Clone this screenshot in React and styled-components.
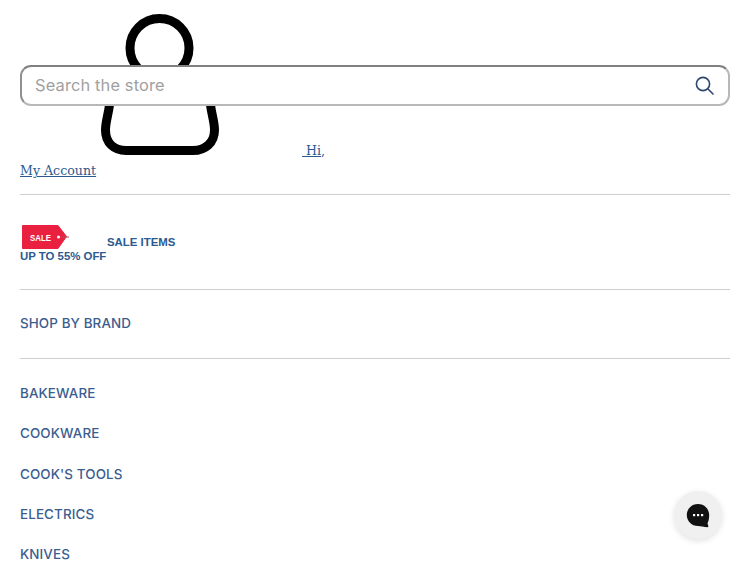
import React from "react";
import styled, { createGlobalStyle } from "styled-components";

const Global = createGlobalStyle`
  html, body { margin: 0; padding: 0; background: #fff; overflow: hidden; height: 100%; }
  #root { height: 100%; }
`;

const Page = styled.div`
  position: relative;
  height: 563px;
  overflow: hidden;
  padding: 0 20px;
  box-sizing: border-box;
  font-family: "Inter", "Liberation Sans", sans-serif;
`;

const SearchBar = styled.form`
  position: absolute;
  top: 65px;
  left: 20px;
  right: 20px;
  height: 41px;
  margin: 0;
  z-index: 2;
`;

const SearchInput = styled.input`
  width: 100%;
  height: 100%;
  box-sizing: border-box;
  border-width: 2px;
  border-style: solid;
  border-color: #808080 #b8b8b8 #b8b8b8 #909090;
  border-radius: 11px;
  background: #fff;
  padding: 0 50px 2px 13px;
  font-family: "Inter", "Liberation Sans", sans-serif;
  font-size: 16.4px;
  letter-spacing: 0.15px;
  color: #333;
  outline: none;
  &::placeholder { color: #a0a0a0; opacity: 1; }
`;

const SearchButton = styled.button`
  position: absolute;
  top: 9px;
  right: 16px;
  width: 20px;
  height: 22px;
  padding: 0;
  border: 0;
  background: none;
  color: #2f4673;
  display: flex;
  align-items: center;
  justify-content: center;
`;

const Account = styled.div`
  height: 194px;
  padding-top: 14px;
  box-sizing: border-box;
  font-family: "DejaVu Serif", "Liberation Serif", serif;
  font-size: 12.6px;
  line-height: 20px;
  color: #34578a;
`;

const AccountLink = styled.a`
  color: #2c5a8f;
  text-decoration: underline;
`;

const AccountIcon = styled.svg`
  width: 282px;
  height: 142px;
  vertical-align: baseline;
  margin-bottom: -1px;
`;

const Rule = styled.hr`
  margin: 0;
  border: 0;
  border-top: 1px solid #cfcfcf;
`;

const SaleRow = styled.div`
  height: 94px;
  padding-top: 30px;
  box-sizing: border-box;
  font-family: "Liberation Sans", Arial, sans-serif;
  font-size: 11.4px;
  font-weight: 700;
  line-height: 14px;
  color: #2c5a8f;
`;

const SaleTop = styled.div`
  display: flex;
  align-items: flex-end;
  margin-bottom: -1px;
`;

const SaleTag = styled.svg`
  width: 87px;
  height: 25px;
  display: block;
  flex: none;
`;

const SaleTitle = styled.span`
  line-height: 14px;
  margin-bottom: 1px;
`;

const NavBlock = styled.nav`
  display: flex;
  flex-direction: column;
  padding: ${(p) => p.$pad || "0"};
`;

const NavLink = styled.a`
  display: block;
  height: 40.25px;
  line-height: 40px;
  font-size: 13.4px;
  font-weight: 500;
  letter-spacing: 0.12px;
  color: #3a5d8f;
  text-decoration: none;
`;

const ChatBubble = styled.button`
  position: fixed;
  left: 674px;
  top: 491px;
  width: 48px;
  height: 48px;
  padding: 0;
  border: 0;
  border-radius: 50%;
  background: #f0f0f0;
  box-shadow: 0 2px 6px rgba(0, 0, 0, 0.12);
  display: flex;
  align-items: center;
  justify-content: center;
`;

const items = ["BAKEWARE", "COOKWARE", "COOK'S TOOLS", "ELECTRICS", "KNIVES"];

export default function App() {
  return (
    <>
      <Global />
      <Page>
        <SearchBar>
          <SearchInput placeholder="Search the store" />
          <SearchButton type="button" aria-label="Search">
            <svg width="19" height="19" viewBox="0 0 19 19" fill="none" stroke="currentColor" strokeWidth="1.6" strokeLinecap="round">
              <circle cx="8" cy="8" r="6.6" />
              <path d="M13 13l5 5" />
            </svg>
          </SearchButton>
        </SearchBar>

        <Account>
          <AccountLink href="#">
            <AccountIcon viewBox="0 14 282 142" fill="none" stroke="#000" strokeWidth="9">
              <circle cx="139.5" cy="48" r="29.5" />
              <path d="M92 85 L89.500 105 C88 116 85.500 122 85.500 130 C85.500 143 94 150.500 106 150.500 H173 C185 150.500 194.500 143 194.500 130 C194.500 122 192 116 190.500 105 L188 85" strokeLinejoin="round" />
            </AccountIcon>
            {" Hi"}
          </AccountLink>
          ,
          <br />
          <AccountLink href="#">My Account</AccountLink>
        </Account>
        <Rule />

        <SaleRow>
          <SaleTop>
            <SaleTag viewBox="0 0 87 25">
              <path d="M2.500 0.500 H38 L46.500 11.500 L38 23.500 H2.500 Z" fill="#e9203f" stroke="#e9203f" strokeLinejoin="round" />
              <text x="10" y="15.500" fontFamily="Liberation Sans, Arial, sans-serif" fontSize="9.500" fontWeight="700" fill="#fff" textLength="21" lengthAdjust="spacingAndGlyphs">SALE</text>
              <circle cx="38.500" cy="12" r="1.500" fill="#fff" />
              <path d="M41 12 H49" stroke="#a8505f" strokeWidth="1" />
            </SaleTag>
            <SaleTitle>SALE ITEMS</SaleTitle>
          </SaleTop>
          UP TO 55% OFF
        </SaleRow>
        <Rule />

        <NavBlock $pad="13px 0 15px">
          <NavLink href="#">SHOP BY BRAND</NavLink>
        </NavBlock>
        <Rule />

        <NavBlock $pad="13.750px 0 0">
          {items.map((t) => (
            <NavLink href="#" key={t}>{t}</NavLink>
          ))}
        </NavBlock>

        <ChatBubble aria-label="Chat">
          <svg width="24" height="25" viewBox="0 0 24 25">
            <path d="M12 1C5.700 1 .800 5.900 .800 12S5.700 23 12 23c2.500 0 6 1 9.500 1.200.8 0 1-.6.800-1.200l-.8-2.800C22.700 18 23.200 15 23.200 12 23.200 5.900 18.300 1 12 1z" fill="#111" />
            <rect x="7" y="11" width="2.200" height="2.200" fill="#fff" />
            <rect x="11" y="11" width="2.200" height="2.200" fill="#fff" />
            <rect x="15" y="11" width="2.200" height="2.200" fill="#fff" />
          </svg>
        </ChatBubble>
      </Page>
    </>
  );
}
